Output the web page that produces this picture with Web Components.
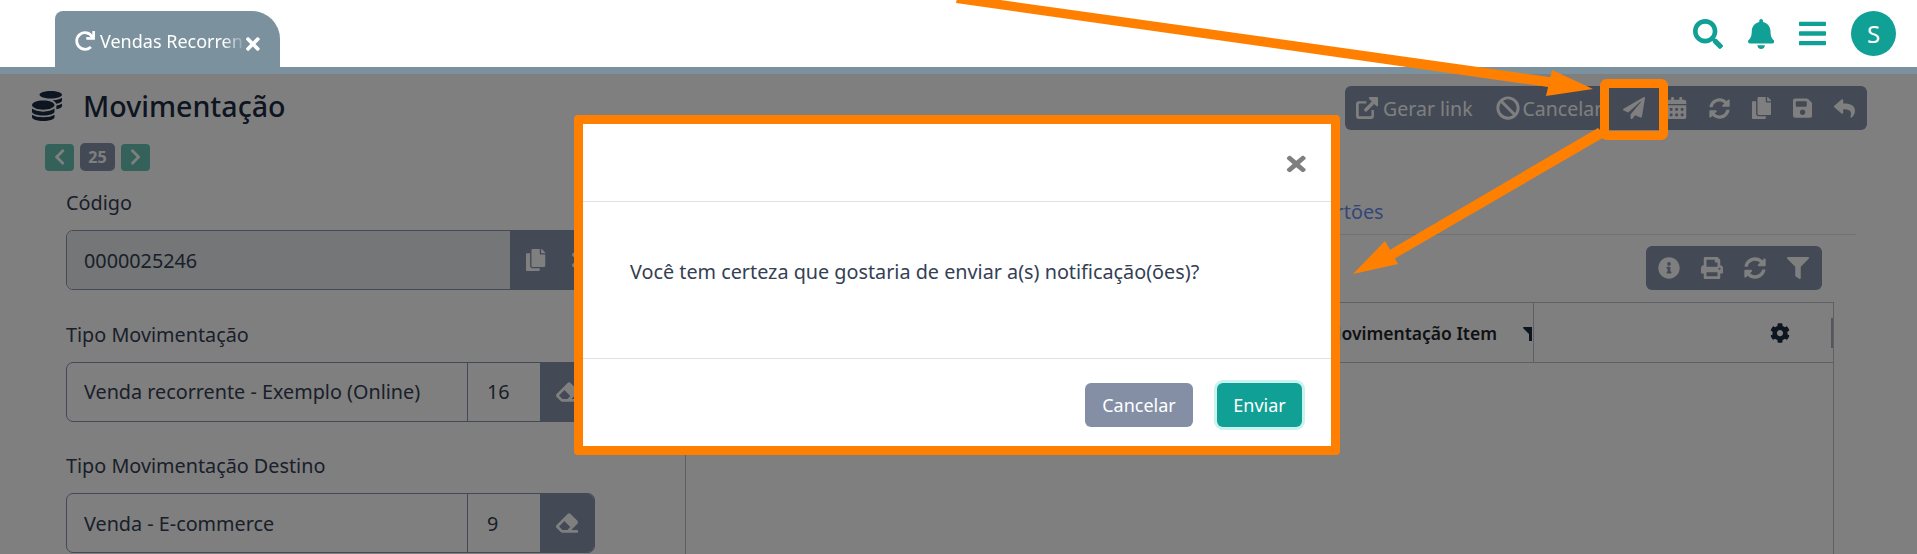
<!doctype html>
<html lang="pt-BR">
<head>
<meta charset="utf-8">
<title>Movimentação</title>
<style>
  html, body { margin: 0; height: 554px; overflow: hidden; background: #fff; }
  body { font-family: "Noto Sans", "Open Sans", sans-serif; color: #344054; position: relative; }
</style>
</head>
<body>
<app-topbar></app-topbar>
<app-main></app-main>
<app-dialog></app-dialog>
<app-arrows></app-arrows>

<script>
const ICONS = {
  search: [512, "M505 442.7L405.3 343c-4.5-4.5-10.6-7-17-7H372c27.6-35.3 44-79.7 44-128C416 93.1 322.9 0 208 0S0 93.1 0 208s93.1 208 208 208c48.3 0 92.7-16.4 128-44v16.3c0 6.4 2.5 12.5 7 17l99.7 99.7c9.4 9.4 24.6 9.4 33.9 0l28.3-28.3c9.4-9.4 9.4-24.6.1-34zM208 336c-70.7 0-128-57.2-128-128 0-70.7 57.2-128 128-128 70.7 0 128 57.2 128 128 0 70.7-57.2 128-128 128z"],
  bell: [448, "M224 512c35.32 0 63.97-28.65 63.97-64H160.03c0 35.35 28.65 64 63.97 64zm215.39-149.71c-19.32-20.76-55.47-51.99-55.47-154.29 0-77.7-54.48-139.9-127.94-155.16V32c0-17.67-14.32-32-31.98-32s-31.98 14.33-31.98 32v20.84C118.56 68.1 64.08 130.3 64.08 208c0 102.3-36.15 133.53-55.47 154.29-6 6.45-8.66 14.16-8.61 21.71.11 16.4 12.98 32 32.1 32h383.8c19.12 0 32-15.6 32.1-32 .05-7.55-2.61-15.27-8.61-21.71z"],
  bars: [448, "M16 132h416c8.837 0 16-7.163 16-16V76c0-8.837-7.163-16-16-16H16C7.163 60 0 67.163 0 76v40c0 8.837 7.163 16 16 16zm0 160h416c8.837 0 16-7.163 16-16v-40c0-8.837-7.163-16-16-16H16c-8.837 0-16 7.163-16 16v40c0 8.837 7.163 16 16 16zm0 160h416c8.837 0 16-7.163 16-16v-40c0-8.837-7.163-16-16-16H16c-8.837 0-16 7.163-16 16v40c0 8.837 7.163 16 16 16z"],
  send: [512, "M476 3.2L12.5 270.6c-18.1 10.4-15.8 35.6 2.2 43.2L121 358.4l287.3-253.2c5.5-4.9 13.3 2.6 8.6 8.3L176 407v80.5c0 23.6 28.5 32.9 42.5 15.8L282 426l124.6 52.2c14.2 6 30.4-2.9 33-18.2l72-432C515 7.8 493.3-6.8 476 3.2z"],
  calendar: [448, "M0 464c0 26.5 21.5 48 48 48h352c26.5 0 48-21.5 48-48V192H0v272zm320-196c0-6.6 5.4-12 12-12h40c6.6 0 12 5.4 12 12v40c0 6.6-5.4 12-12 12h-40c-6.6 0-12-5.4-12-12v-40zm0 128c0-6.6 5.4-12 12-12h40c6.6 0 12 5.4 12 12v40c0 6.6-5.4 12-12 12h-40c-6.6 0-12-5.4-12-12v-40zM192 268c0-6.6 5.4-12 12-12h40c6.6 0 12 5.4 12 12v40c0 6.6-5.4 12-12 12h-40c-6.6 0-12-5.4-12-12v-40zm0 128c0-6.6 5.4-12 12-12h40c6.6 0 12 5.4 12 12v40c0 6.6-5.4 12-12 12h-40c-6.6 0-12-5.4-12-12v-40zM64 268c0-6.6 5.4-12 12-12h40c6.6 0 12 5.4 12 12v40c0 6.6-5.4 12-12 12H76c-6.6 0-12-5.4-12-12v-40zm0 128c0-6.6 5.4-12 12-12h40c6.6 0 12 5.4 12 12v40c0 6.6-5.4 12-12 12H76c-6.6 0-12-5.4-12-12v-40zM400 64h-48V16c0-8.8-7.2-16-16-16h-32c-8.8 0-16 7.2-16 16v48H160V16c0-8.8-7.2-16-16-16h-32c-8.8 0-16 7.2-16 16v48H48C21.5 64 0 85.5 0 112v48h448v-48c0-26.5-21.5-48-48-48z"],
  sync: [512, "M370.72 133.28C339.458 104.008 298.888 87.962 255.848 88c-77.458.068-144.328 53.178-162.791 126.85-1.344 5.363-6.122 9.15-11.651 9.15H24.103c-7.498 0-13.194-6.807-11.807-14.176C33.933 94.924 134.813 8 256 8c66.448 0 126.791 26.136 171.315 68.685L463.03 40.97C478.149 25.851 504 36.559 504 57.941V192c0 13.255-10.745 24-24 24H345.941c-21.382 0-32.09-25.851-16.971-40.971l41.75-41.749zM32 296h134.059c21.382 0 32.09 25.851 16.971 40.971l-41.75 41.75c31.262 29.273 71.835 45.319 114.876 45.28 77.418-.07 144.315-53.144 162.787-126.849 1.344-5.363 6.122-9.15 11.651-9.15h57.304c7.498 0 13.194 6.807 11.807 14.176C478.067 417.076 377.187 504 256 504c-66.448 0-126.791-26.136-171.315-68.685L48.97 471.03C33.851 486.149 8 475.441 8 454.059V320c0-13.255 10.745-24 24-24z"],
  copy: [448, "M320 448v40c0 13.255-10.745 24-24 24H24c-13.255 0-24-10.745-24-24V120c0-13.255 10.745-24 24-24h72v296c0 30.879 25.121 56 56 56h168zm0-344V0H152c-13.255 0-24 10.745-24 24v368c0 13.255 10.745 24 24 24h272c13.255 0 24-10.745 24-24V128H344c-13.2 0-24-10.8-24-24zm120.971-31.029L375.029 7.029A24 24 0 0 0 358.059 0H352v96h96v-6.059a24 24 0 0 0-7.029-16.97z"],
  save: [448, "M433.941 129.941l-83.882-83.882A48 48 0 0 0 316.118 32H48C21.49 32 0 53.49 0 80v352c0 26.51 21.49 48 48 48h352c26.51 0 48-21.49 48-48V163.882a48 48 0 0 0-14.059-33.941zM224 416c-35.346 0-64-28.654-64-64 0-35.346 28.654-64 64-64s64 28.654 64 64c0 35.346-28.654 64-64 64zm96-304.52V212c0 6.627-5.373 12-12 12H76c-6.627 0-12-5.373-12-12V108c0-6.627 5.373-12 12-12h228.52c3.183 0 6.235 1.264 8.485 3.515l3.48 3.48A11.996 11.996 0 0 1 320 111.48z"],
  reply: [512, "M8.309 189.836L184.313 37.851C199.719 24.546 224 35.347 224 56.015v80.053c160.629 1.839 288 34.032 288 186.258 0 61.441-39.581 122.309-83.333 154.132-13.653 9.931-33.111-2.533-28.077-18.631 45.344-145.012-21.507-183.51-176.59-185.742V360c0 20.7-24.3 31.453-39.687 18.164l-176.004-152c-11.071-9.562-11.086-26.753 0-36.328z"],
  ban: [512, "M256 8C119.034 8 8 119.033 8 256s111.034 248 248 248 248-111.034 248-248S392.967 8 256 8zm130.108 117.892c65.448 65.448 70 165.481 20.677 235.637L150.47 105.216c70.204-49.356 170.226-44.735 235.638 20.676zM125.892 386.108c-65.448-65.448-70-165.481-20.677-235.637L361.53 406.784c-70.203 49.356-170.226 44.736-235.638-20.676z"],
  link: [512, "M64 96h176v56H80c-8.800 0-16 7.200-16 16v264c0 8.800 7.200 16 16 16h264c8.800 0 16-7.200 16-16V304h56v144c0 35.300-28.700 64-64 64H64c-35.300 0-64-28.700-64-64V160c0-35.300 28.700-64 64-64zM320 0h168c13.300 0 24 10.700 24 24v168c0 21.400-25.900 32.100-41 17l-47-47-176 176c-9.400 9.400-24.600 9.400-33.900 0l-22.100-22.100c-9.400-9.400-9.400-24.600 0-33.900l176-176-47-47C285.900 25.900 296.600 0 320 0z"],
  info: [512, "M256 8C119.043 8 8 119.083 8 256c0 136.997 111.043 248 248 248s248-111.003 248-248C504 119.083 392.957 8 256 8zm0 110c23.196 0 42 18.804 42 42s-18.804 42-42 42-42-18.804-42-42 18.804-42 42-42zm56 254c0 6.627-5.373 12-12 12h-88c-6.627 0-12-5.373-12-12v-24c0-6.627 5.373-12 12-12h12v-64h-12c-6.627 0-12-5.373-12-12v-24c0-6.627 5.373-12 12-12h64c6.627 0 12 5.373 12 12v100h12c6.627 0 12 5.373 12 12v24z"],
  print: [512, "M448 192V77.25c0-8.49-3.37-16.62-9.37-22.63L393.37 9.37c-6-6-14.14-9.37-22.63-9.37H96C78.33 0 64 14.33 64 32v160c-35.35 0-64 28.65-64 64v112c0 8.84 7.16 16 16 16h48v96c0 17.67 14.33 32 32 32h320c17.67 0 32-14.33 32-32v-96h48c8.84 0 16-7.16 16-16V256c0-35.35-28.65-64-64-64zm-64 256H128v-96h256v96zm0-224H128V64h192v48c0 8.84 7.16 16 16 16h48v96zm48 72c-13.25 0-24-10.75-24-24 0-13.26 10.75-24 24-24s24 10.74 24 24c0 13.25-10.75 24-24 24z"],
  filter: [512, "M487.976 0H24.028C2.71 0-8.047 25.866 7.058 40.971L192 225.941V432c0 7.831 3.821 15.17 10.237 19.662l80 55.98C298.02 518.69 320 507.493 320 487.98V225.941l184.947-184.97C520.021 25.896 509.338 0 487.976 0z"],
  cog: [512, "M487.4 315.7l-42.6-24.6c4.3-23.2 4.3-47 0-70.2l42.6-24.6c4.9-2.8 7.1-8.6 5.5-14-11.1-35.6-30-67.8-54.7-94.6-3.8-4.1-10-5.1-14.8-2.3L380.8 110c-17.9-15.4-38.5-27.3-60.8-35.1V25.8c0-5.6-3.9-10.5-9.4-11.7-36.7-8.2-74.3-7.8-109.2 0-5.5 1.2-9.4 6.1-9.4 11.7V75c-22.2 7.9-42.8 19.8-60.8 35.1L88.7 85.5c-4.9-2.8-11-1.9-14.8 2.3-24.7 26.7-43.6 58.9-54.7 94.6-1.7 5.4.6 11.2 5.5 14L67.3 221c-4.3 23.2-4.3 47 0 70.2l-42.6 24.6c-4.9 2.8-7.1 8.6-5.5 14 11.1 35.6 30 67.8 54.7 94.6 3.8 4.1 10 5.1 14.8 2.3l42.6-24.6c17.9 15.4 38.5 27.3 60.8 35.1v49.2c0 5.6 3.9 10.5 9.4 11.7 36.7 8.2 74.3 7.8 109.2 0 5.5-1.2 9.4-6.1 9.4-11.7v-49.2c22.2-7.9 42.8-19.8 60.8-35.1l42.6 24.6c4.9 2.8 11 1.9 14.8-2.3 24.7-26.7 43.6-58.9 54.7-94.6 1.5-5.5-.7-11.3-5.6-14.1zM256 336c-44.1 0-80-35.9-80-80s35.9-80 80-80 80 35.9 80 80-35.9 80-80 80z"],
  coins: [512, "M0 405.3V448c0 35.3 86 64 192 64s192-28.7 192-64v-42.7C342.7 434.4 267.2 448 192 448S41.3 434.4 0 405.3zM320 128c106 0 192-28.7 192-64S426 0 320 0 128 28.7 128 64s86 64 192 64zM0 300.400V352c0 35.300 86 64 192 64s192-28.700 192-64v-51.600c-41.300 34-116.900 51.600-192 51.600S41.300 334.400 0 300.400zm416 11c57.300-11.100 96-31.700 96-55.400v-42.700c-23.200 16.400-57.300 27.600-96 34.500v63.600zM192 160C86 160 0 195.800 0 240s86 80 192 80 192-35.800 192-80-86-80-192-80zm219.300 56.300c60-10.800 100.700-32 100.700-56.300v-42.700c-35.500 25.100-96.500 38.600-160.700 41.800 29.500 14.300 51.200 33.500 60 57.200z"],
  left: [320, "M34.520 239.030L228.870 44.690c9.370-9.370 24.570-9.370 33.940 0l22.670 22.670c9.360 9.360 9.370 24.520.04 33.900L131.490 256l154.020 154.750c9.340 9.380 9.320 24.540-.04 33.900l-22.670 22.670c-9.370 9.370-24.570 9.370-33.940 0L34.520 272.970c-9.370-9.370-9.370-24.570 0-33.940z"],
  right: [320, "M285.476 272.971L91.132 467.314c-9.373 9.373-24.569 9.373-33.941 0l-22.667-22.667c-9.357-9.357-9.375-24.522-.04-33.901L188.505 256 34.484 101.255c-9.335-9.379-9.317-24.544.04-33.901l22.667-22.667c9.373-9.373 24.569-9.373 33.941 0L285.475 239.030c9.373 9.372 9.373 24.568.001 33.941z"],
  times: [352, "M242.720 256l100.070-100.070c12.280-12.280 12.280-32.190 0-44.480l-22.240-22.240c-12.280-12.280-32.190-12.280-44.480 0L176 189.280 75.930 89.210c-12.280-12.280-32.190-12.280-44.480 0L9.210 111.450c-12.280 12.280-12.280 32.190 0 44.480L109.280 256 9.210 356.070c-12.280 12.280-12.280 32.190 0 44.480l22.240 22.240c12.280 12.280 32.200 12.280 44.480 0L176 322.720l100.070 100.070c12.280 12.280 32.200 12.280 44.480 0l22.240-22.240c12.280-12.280 12.280-32.190 0-44.480L242.720 256z"],
  redo: [512, "M500.330 0h-47.410a12 12 0 0 0-12 12.570l4 82.760A247.420 247.420 0 0 0 256 8C119.340 8 7.900 119.530 8 256.190 8.100 393.070 119.100 504 256 504a247.100 247.100 0 0 0 166.180-63.910 12 12 0 0 0 .48-17.430l-34-34a12 12 0 0 0-16.380-.55A176 176 0 1 1 402.100 157.800l-101.530-4.870a12 12 0 0 0-12.570 12v47.410a12 12 0 0 0 12 12h200.330a12 12 0 0 0 12-12V12a12 12 0 0 0-12-12z"],
  eraser: [512, "M497.941 273.941c18.745-18.745 18.745-49.137 0-67.882l-160-160c-18.745-18.745-49.136-18.746-67.883 0l-256 256c-18.745 18.745-18.745 49.137 0 67.882l96 96A48.004 48.004 0 0 0 144 480h356c6.627 0 12-5.373 12-12v-40c0-6.627-5.373-12-12-12H355.883l142.058-142.059zm-302.627-62.627l137.373 137.373L265.373 416H150.628l-80-80 124.686-124.686z"]
};

// icon: name + size (px of the 512 box height), colour comes from currentColor
class AppIcon extends HTMLElement {
  connectedCallback() {
    const [w, d] = ICONS[this.getAttribute("name")];
    const size = Number(this.getAttribute("size") || 20);
    this.attachShadow({ mode: "open" });
    this.shadowRoot.innerHTML = `
      <style>:host { display: inline-flex; flex: none; line-height: 0; } svg { display: block; fill: currentColor; }</style>
      <svg width="${size * w / 512}" height="${size}" viewBox="0 0 ${w} 512"><path d="${d}"/></svg>`;
  }
}
customElements.define("app-icon", AppIcon);

class AppTopbar extends HTMLElement {
  connectedCallback() {
    this.attachShadow({ mode: "open" });
    this.shadowRoot.innerHTML = `
      <style>
        :host { display: block; border-bottom: 7px solid #7b919e; background: #fff; }
        .row { height: 67px; display: flex; justify-content: space-between; }
        .tab {
          margin: 11px 0 0 55px; width: 225px; box-sizing: border-box; height: 56px;
          padding: 3px 0 0 20px; display: flex; align-items: center; gap: 5px;
          background: #7b919e; color: #fff; border-radius: 8px 28px 0 0; font-size: 18px;
        }
        .tab .label {
          white-space: nowrap; flex: none;
          -webkit-mask-image: linear-gradient(to right, #000 86%, rgba(0,0,0,.15) 100%);
          mask-image: linear-gradient(to right, #000 86%, rgba(0,0,0,.15) 100%);
        }
        .tab .x { margin: 6px 0 0 -2px; }
        .tools { display: flex; align-items: center; gap: 25px; padding-right: 21px; color: #11a095; }
        .avatar {
          width: 45px; height: 45px; border-radius: 50%; background: #11a095; color: #fff;
          display: flex; align-items: center; justify-content: center; font-size: 24px;
        }
      </style>
      <div class="row">
        <div class="tab">
          <app-icon name="redo" size="20"></app-icon>
          <span class="label">Vendas Recorren</span>
          <app-icon class="x" name="times" size="20"></app-icon>
        </div>
        <div class="tools">
          <app-icon name="search" size="30"></app-icon>
          <app-icon name="bell" size="30"></app-icon>
          <app-icon name="bars" size="31"></app-icon>
          <div class="avatar">S</div>
        </div>
      </div>`;
  }
}
customElements.define("app-topbar", AppTopbar);

// dark icon strip used at the top right of the page and above the table
class AppToolbar extends HTMLElement {
  connectedCallback() {
    this.attachShadow({ mode: "open" });
    this.shadowRoot.innerHTML = `
      <style>
        :host {
          display: inline-flex; align-items: center; height: 44px; box-sizing: border-box;
          padding: var(--tb-pad, 0 12px 0 11px); gap: var(--tb-gap, 22px); background: #8694aa; color: #fff;
          border-radius: 6px; font-size: 19.5px; white-space: nowrap;
        }
      </style>
      <slot></slot>`;
  }
}
customElements.define("app-toolbar", AppToolbar);

class AppField extends HTMLElement {
  connectedCallback() {
    const num = this.getAttribute("num");
    const btns = (this.getAttribute("buttons") || "eraser").split(",");
    this.attachShadow({ mode: "open" });
    this.shadowRoot.innerHTML = `
      <style>
        :host { display: block; }
        label { display: block; font-size: 19.8px; line-height: 24px; margin-bottom: 15px; color: #344054; }
        .group { height: 60px; display: flex; box-sizing: border-box; border: 1px solid #8694aa; border-radius: 7px; overflow: hidden; font-size: 19.8px; color: #344054; }
        .val { flex: 1; display: flex; align-items: center; padding-left: 17px; min-width: 0; white-space: nowrap; }
        .group.ro .val { background: #e9ecef; }
        .num { width: 73px; box-sizing: border-box; display: flex; align-items: center; padding-left: 19px; border-left: 1px solid #8694aa; }
        .btn { width: 54px; flex: none; box-sizing: border-box; background: #8694aa; color: #fff; display: flex; align-items: center; justify-content: center; }
        .group.ro .btn { width: 48px; padding-left: 4px; }
        .group.ro .btn + .btn { width: 36px; padding-left: 8px; }
      </style>
      <label>${this.getAttribute("label")}</label>
      <div class="group ${num ? "" : "ro"}">
        <div class="val">${this.getAttribute("value")}</div>
        ${num ? `<div class="num">${num}</div>` : ""}
        ${btns.map((b) => `<div class="btn"><app-icon name="${b}" size="22"></app-icon></div>`).join("")}
      </div>`;
  }
}
customElements.define("app-field", AppField);

class AppGrid extends HTMLElement {
  connectedCallback() {
    this.attachShadow({ mode: "open" });
    this.shadowRoot.innerHTML = `
      <style>
        :host { display: block; margin: 0 22px 0 0; font-size: 17.5px; color: #212529; }
        .head { height: 61px; display: grid; grid-template-columns: 1fr 300px; border: 1px solid #bcc0c6; box-sizing: border-box; }
        .c1 { display: flex; align-items: center; justify-content: flex-end; white-space: nowrap; padding-right: 1px; }
        .c1 b { margin-right: 26px; font-weight: 600; }
        .corner { width: 9px; height: 17px; overflow: hidden; align-self: flex-start; margin-top: 21px; color: #1a2b42; }
        .c2 { border-left: 1px solid #bcc0c6; display: flex; align-items: center; justify-content: flex-end; padding-right: 43px; color: #1a2b42; position: relative; }
        .bar { position: absolute; right: 0; top: 15px; height: 30px; width: 2px; background: #a9adb3; }
        .body { height: 200px; border: solid #bcc0c6; border-width: 0 1px; }
      </style>
      <div class="head">
        <div class="c1"><b>Movimentação Item</b><span class="corner"><app-icon name="filter" size="16"></app-icon></span></div>
        <div class="c2"><app-icon name="cog" size="20"></app-icon><span class="bar"></span></div>
      </div>
      <div class="body"></div>`;
  }
}
customElements.define("app-grid", AppGrid);

class AppMain extends HTMLElement {
  connectedCallback() {
    this.attachShadow({ mode: "open" });
    this.shadowRoot.innerHTML = `
      <style>
        :host { display: block; }
        .top { display: flex; justify-content: space-between; align-items: flex-start; padding: 12px 50px 0 32px; }
        .title { display: flex; align-items: center; gap: 21px; font-size: 28.6px; line-height: 40px; color: #1a2b42; font-weight: 500; }
        .lnk { display: inline-flex; align-items: center; gap: 5px; margin-right: 1px; }
        .ban { display: inline-flex; align-items: center; gap: 3px; margin-right: -1px; }
        .pager { display: flex; gap: 6px; margin: 13px 0 0 45px; height: 28px; align-items: center; }
        .pg { width: 29px; height: 27px; border-radius: 4px; background: #68c4b6; color: #fff; display: flex; align-items: center; justify-content: center; }
        .count { width: 35px; height: 28px; border-radius: 5px; background: #8694aa; color: #fff; font-size: 16px; font-weight: 700; display: flex; align-items: center; justify-content: center; }
        .cols { display: grid; grid-template-columns: 529px 1171px; column-gap: 90px; margin: 20px 0 0 66px; }
        .left { display: flex; flex-direction: column; gap: 32.5px; }
        .tabs { height: 40px; padding: 0 0 3px 627px; border-bottom: 1px solid #dee2e6; display: flex; align-items: center; font-size: 19.8px; color: #6b8ef0; }
        .tbar { display: flex; justify-content: flex-end; margin: 11px 34px 12px 0; --tb-gap: 21px; --tb-pad: 0 13px 0 12px; }
      </style>
      <div class="top">
        <div class="title"><app-icon name="coins" size="30"></app-icon>Movimentação</div>
        <app-toolbar>
          <span class="lnk"><app-icon name="link" size="22"></app-icon>Gerar link</span>
          <span class="ban"><app-icon name="ban" size="24"></app-icon>Cancelar</span>
          <app-icon name="send" size="22"></app-icon>
          <app-icon name="calendar" size="22"></app-icon>
          <app-icon name="sync" size="21"></app-icon>
          <app-icon name="copy" size="22"></app-icon>
          <app-icon name="save" size="22"></app-icon>
          <app-icon name="reply" size="21"></app-icon>
        </app-toolbar>
      </div>
      <div class="pager">
        <div class="pg"><app-icon name="left" size="18"></app-icon></div>
        <div class="count">25</div>
        <div class="pg"><app-icon name="right" size="18"></app-icon></div>
      </div>
      <div class="cols">
        <div class="left">
          <app-field label="Código" value="0000025246" buttons="copy,times"></app-field>
          <app-field label="Tipo Movimentação" value="Venda recorrente - Exemplo (Online)" num="16"></app-field>
          <app-field label="Tipo Movimentação Destino" value="Venda - E-commerce" num="9"></app-field>
        </div>
        <div class="right">
          <div class="tabs">Cartões</div>
          <div class="tbar">
            <app-toolbar>
              <app-icon name="info" size="22"></app-icon>
              <app-icon name="print" size="22"></app-icon>
              <app-icon name="sync" size="22"></app-icon>
              <app-icon name="filter" size="22"></app-icon>
            </app-toolbar>
          </div>
          <app-grid></app-grid>
        </div>
      </div>`;
  }
}
customElements.define("app-main", AppMain);

// backdrop + modal box with the orange annotation frame
class AppDialog extends HTMLElement {
  connectedCallback() {
    this.attachShadow({ mode: "open" });
    this.shadowRoot.innerHTML = `
      <style>
        :host { position: absolute; left: 0; right: 0; top: 74px; height: 480px; background: rgba(0,0,0,.5); display: block; }
        .box {
          position: absolute; left: 574px; top: 41px; width: 766px; height: 340px; box-sizing: border-box;
          border: 9px solid #ff8000; border-radius: 4px; background: #fff; display: flex; flex-direction: column;
        }
        .hd { height: 78px; box-sizing: border-box; flex: none; border-bottom: 1px solid #dee2e6; display: flex; justify-content: flex-end; align-items: flex-start; padding: 28px 27px 0 0; color: #7f7f7f; }
        .hd app-icon { transform: scaleX(1.15); }
        .bd { flex: 1; padding: 56px 47px 0; font-size: 19.8px; line-height: 27px; color: #344054; }
        .ft { height: 88px; flex: none; border-top: 1px solid #dee2e6; display: flex; justify-content: flex-end; align-items: flex-start; gap: 24px; padding: 24px 29px 0 0; box-sizing: border-box; }
        button { height: 44px; border: 0; border-radius: 6px; color: #fff; font: 18px "Noto Sans", sans-serif; padding: 0; }
        .no { width: 108px; background: #848fa6; }
        .yes { width: 85px; background: #11a095; box-shadow: 0 0 0 3px #c8f3ee; }
      </style>
      <div class="box">
        <div class="hd"><app-icon name="times" size="24"></app-icon></div>
        <div class="bd">Você tem certeza que gostaria de enviar a(s) notificação(ões)?</div>
        <div class="ft"><button class="no">Cancelar</button><button class="yes">Enviar</button></div>
      </div>`;
  }
}
customElements.define("app-dialog", AppDialog);

// orange annotations drawn over the screenshot
class AppArrows extends HTMLElement {
  connectedCallback() {
    this.attachShadow({ mode: "open" });
    this.shadowRoot.innerHTML = `
      <style>
        :host { position: absolute; inset: 0; display: block; pointer-events: none; }
        svg { display: block; }
      </style>
      <svg width="1917" height="554" viewBox="0 0 1917 554">
        <g fill="#ff8000" stroke="none">
          <path d="M958 -6L1556 78L1555 88L956 3z"/>
          <path d="M1552 70L1593 89L1546 96z"/>
          <path d="M1598 128L1606 136L1394 259L1388 251z"/>
          <path d="M1385 241L1353 274L1398 264z"/>
        </g>
        <rect x="1604.500" y="83.500" width="59" height="52" rx="2" fill="none" stroke="#ff8000" stroke-width="9"/>
      </svg>`;
  }
}
customElements.define("app-arrows", AppArrows);
</script>
</body>
</html>
